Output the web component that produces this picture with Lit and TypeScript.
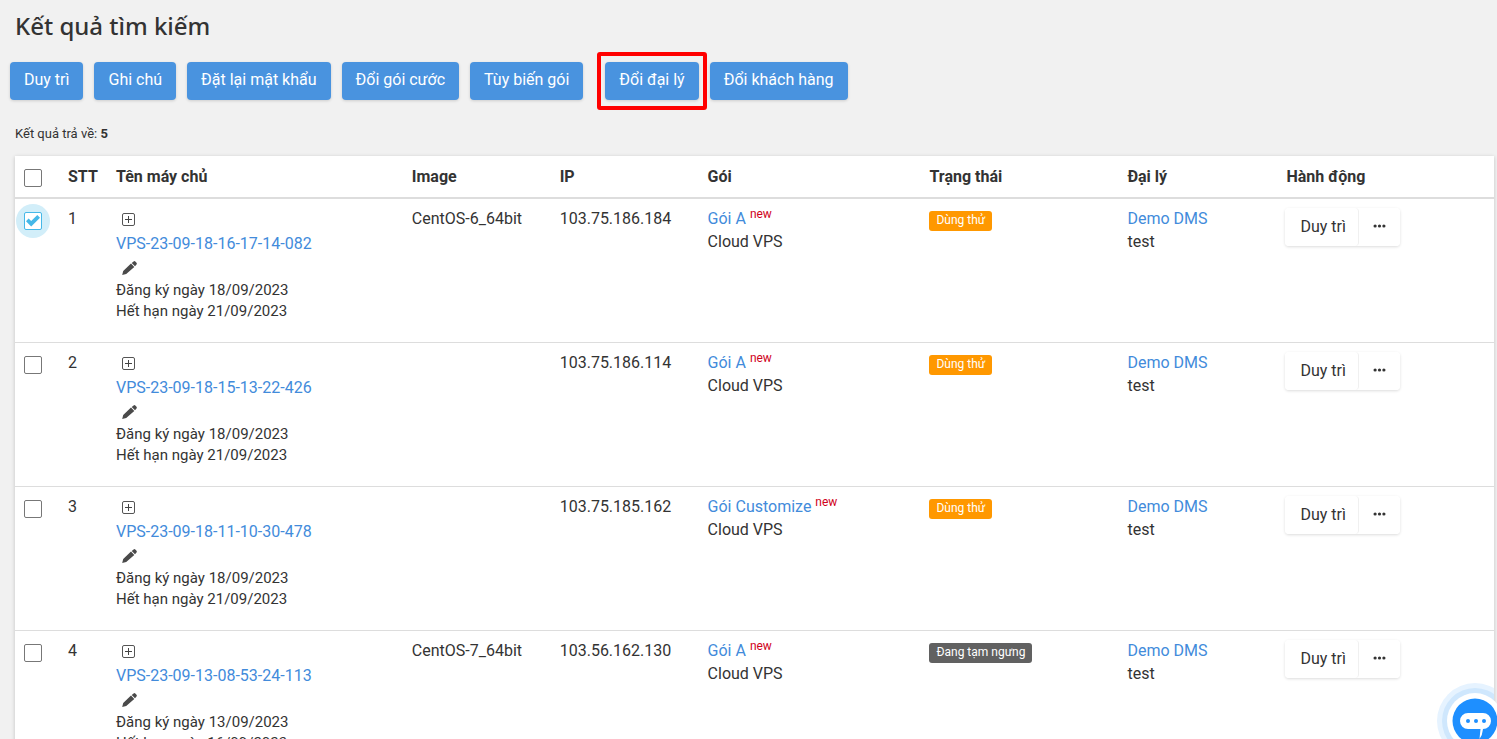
import { LitElement, html, css, svg, nothing } from "lit";
import { customElement, property, state } from "lit/decorators.js";
import { classMap } from "lit/directives/class-map.js";

interface Server {
  id: number;
  name: string;
  image: string;
  ip: string;
  plan: string;
  status: "trial" | "paused";
  from: string;
  to: string;
}

const SERVERS: Server[] = [
  { id: 1, name: "VPS-23-09-18-16-17-14-082", image: "CentOS-6_64bit", ip: "103.75.186.184", plan: "Gói A", status: "trial", from: "18/09/2023", to: "21/09/2023" },
  { id: 2, name: "VPS-23-09-18-15-13-22-426", image: "", ip: "103.75.186.114", plan: "Gói A", status: "trial", from: "18/09/2023", to: "21/09/2023" },
  { id: 3, name: "VPS-23-09-18-11-10-30-478", image: "", ip: "103.75.185.162", plan: "Gói Customize", status: "trial", from: "18/09/2023", to: "21/09/2023" },
  { id: 4, name: "VPS-23-09-13-08-53-24-113", image: "CentOS-7_64bit", ip: "103.56.162.130", plan: "Gói A", status: "paused", from: "13/09/2023", to: "16/09/2023" },
];

const STATUS_LABEL = { trial: "Dùng thử", paused: "Đang tạm ngưng" };

const ACTIONS = ["Duy trì", "Ghi chú", "Đặt lại mật khẩu", "Đổi gói cước", "Tùy biến gói", "Đổi đại lý", "Đổi khách hàng"];
const MARKED_ACTION = "Đổi đại lý";

const plusIcon = html`<svg width="13" height="13" viewBox="0 0 13 13" aria-hidden="true">
  ${svg`<rect x="0.5" y="0.5" width="12" height="12" rx="1.5" fill="none" stroke="#555"/>
  <path d="M3 6.5H10M6.5 3V10" stroke="#444" fill="none"/>`}
</svg>`;

const pencilIcon = html`<svg width="15" height="14" viewBox="0 0 15 14" aria-hidden="true">
  ${svg`<path fill="#4a4a4a" d="M0.2 14L1.2 10L9 2.6L12.3 5.9L4.2 13.1Z M9.7 2L11.6 0.4Q12.5 -0.2 13.3 0.5L14.5 1.7Q15.2 2.5 14.5 3.4L13 5.2Z"/>`}
</svg>`;

@customElement("check-box")
export class CheckBox extends LitElement {
  @property() label = "";
  @property({ type: Boolean }) checked = false;

  static styles = css`
    :host { display: block; }
    .wrap { position: relative; display: block; width: 18px; height: 18px; }
    .wrap.on::before {
      content: "";
      position: absolute;
      inset: -8px;
      border-radius: 50%;
      background: #d2eef9;
    }
    .box {
      position: relative;
      appearance: none;
      display: block;
      box-sizing: border-box;
      width: 18px;
      height: 18px;
      margin: 0;
      border: 1px solid #777;
      border-radius: 2px;
      background: #fff;
    }
    .box:checked { border-color: #45b8e8; }
    .tick { position: absolute; top: 3px; left: 2px; pointer-events: none; }
  `;

  render() {
    return html`<label class=${classMap({ wrap: true, on: this.checked })}>
      <input class="box" type="checkbox" aria-label=${this.label} .checked=${this.checked}
        @change=${(e: Event) => (this.checked = (e.target as HTMLInputElement).checked)} />
      ${this.checked
        ? html`<svg class="tick" width="14" height="12" viewBox="0 0 14 12" aria-hidden="true">
            ${svg`<path fill="#45b8e8" d="M0 6.2L2.6 3.6L5.2 6.1L11.3 0.1L14 2.8L5.2 11.4Z"/>`}
          </svg>`
        : nothing}
    </label>`;
  }
}

@customElement("app-root")
export class AppRoot extends LitElement {
  @state() private selected = new Set([1]);

  static styles = css`
    :host {
      display: block;
      box-sizing: border-box;
      min-height: 100vh;
      padding: 9px 3px 0 15px;
      background: #f1f1f1;
      color: #333;
      font: 16px/23px Roboto, "Noto Sans", sans-serif;
    }
    a { color: #428bdb; text-decoration: none; }
    button { font: inherit; color: inherit; border: 0; cursor: pointer; }
    .title {
      margin: 0 0 20px;
      font: 500 24px/33px "Noto Sans", sans-serif;
    }
    .toolbar { display: flex; flex-wrap: wrap; gap: 11px; margin-left: -5px; }
    .tool {
      height: 38px;
      padding: 0 14px 4px;
      border-radius: 4px;
      background: #4993df;
      color: #fff;
      box-shadow: 0 1px 3px rgba(0, 0, 0, 0.15);
    }
    .marked { position: relative; margin-left: 11px; }
    .marked::after {
      content: "";
      position: absolute;
      inset: -10px -8px;
      border: 4px solid #f00;
      border-radius: 3px;
    }
    .summary { margin: 22px 0 11px; font-size: 13px; }
    .card { background: #fff; box-shadow: 0 1px 4px rgba(0, 0, 0, 0.2); }
    .grid { width: 100%; border-collapse: separate; border-spacing: 0; table-layout: fixed; }
    .grid th, .grid td { box-sizing: border-box; padding: 8px; text-align: left; vertical-align: top; }
    .grid th { padding: 9px 8px; border-bottom: 2px solid #ddd; font-weight: 700; }
    .grid td { border-bottom: 1px solid #ddd; }
    .check { width: 45px; }
    .stt { width: 48px; }
    .c20 { width: 20%; }
    .c15 { width: 15%; }
    .c10 { width: 10%; }
    .agent { width: 159px; }
    .state { width: 198px; }
    .grid th.check, .grid td.check { padding: 13px 8px 0 9px; }
    .icon {
      display: flex;
      align-items: center;
      height: 24px;
      padding: 0 6px;
      background: none;
    }
    .name { display: block; line-height: 25px; }
    .dates { margin: 0 0 12px; font-size: 15px; line-height: 21px; }
    .new { color: #d0021b; font-size: 12px; line-height: 0; vertical-align: super; }
    .badge {
      display: inline-block;
      box-sizing: border-box;
      height: 20px;
      margin-top: 4px;
      padding: 0 7px;
      border-radius: 3px;
      color: #fff;
      font-size: 12px;
      line-height: 19px;
      vertical-align: top;
    }
    .trial { background: #ff9800; }
    .paused { background: #616161; }
    .group { display: inline-flex; margin: 1px 0 0 -1px; border-radius: 4px; box-shadow: 0 1px 3px rgba(0, 0, 0, 0.14); }
    .act, .more { height: 38px; background: #fff; border-radius: 4px; }
    .act { padding: 0 12px 2px 15px; border-right: 1px solid #f0f0f0; }
    .more { display: flex; align-items: center; padding: 0 14px 2px; }
    .chat {
      position: fixed;
      right: -16px;
      bottom: -20px;
      width: 76px;
      height: 76px;
      padding: 0;
      background: none;
    }
  `;

  private renderRow(s: Server) {
    return html`<tr>
      <td class="check"><check-box label="Chọn ${s.name}" ?checked=${this.selected.has(s.id)}></check-box></td>
      <td>${s.id}</td>
      <td>
        <button class="icon" aria-label="Mở rộng">${plusIcon}</button>
        <a class="name" href="#">${s.name}</a>
        <button class="icon" aria-label="Sửa">${pencilIcon}</button>
        <p class="dates">Đăng ký ngày ${s.from}<br />Hết hạn ngày ${s.to}</p>
      </td>
      <td>${s.image}</td>
      <td>${s.ip}</td>
      <td><a href="#">${s.plan}</a> <span class="new">new</span><br />Cloud VPS</td>
      <td><span class="badge ${s.status}">${STATUS_LABEL[s.status]}</span></td>
      <td><a href="#">Demo DMS</a><br />test</td>
      <td>
        <div class="group">
          <button class="act">Duy trì</button>
          <button class="more" aria-label="Thêm">
            <svg width="13" height="4" viewBox="0 0 13 4" aria-hidden="true">
              ${svg`<g fill="#333"><circle cx="2.1" cy="2" r="1.6"/><circle cx="6.5" cy="2" r="1.6"/><circle cx="10.9" cy="2" r="1.6"/></g>`}
            </svg>
          </button>
        </div>
      </td>
    </tr>`;
  }

  render() {
    return html`
      <h1 class="title">Kết quả tìm kiếm</h1>
      <div class="toolbar">
        ${ACTIONS.map((a) => html`<button class=${classMap({ tool: true, marked: a === MARKED_ACTION })}>${a}</button>`)}
      </div>
      <p class="summary">Kết quả trả về: <b>5</b></p>
      <div class="card">
        <table class="grid">
          <thead>
            <tr>
              <th class="check"><check-box label="Chọn tất cả"></check-box></th>
              <th class="stt">STT</th>
              <th class="c20">Tên máy chủ</th>
              <th class="c10">Image</th>
              <th class="c10">IP</th>
              <th class="c15">Gói</th>
              <th class="state">Trạng thái</th>
              <th class="agent">Đại lý</th>
              <th>Hành động</th>
            </tr>
          </thead>
          <tbody>${SERVERS.map((s) => this.renderRow(s))}</tbody>
        </table>
      </div>
      <button class="chat" aria-label="Chat">
        <svg width="76" height="76" viewBox="0 0 76 76" aria-hidden="true">
          ${svg`<clipPath id="halo"><rect width="57" height="76"/></clipPath>
          <g clip-path="url(#halo)">
            <circle cx="38" cy="38" r="38" fill="#e6f3ff"/>
            <circle cx="38" cy="38" r="33" fill="#cfe7fd"/>
          </g>
          <circle cx="38" cy="38" r="28" fill="#fff"/>
          <circle cx="38" cy="38" r="22.5" fill="#1e8fff"/>
          <path fill="#fff" d="M31 30H46A7.5 7.5 0 0 1 46 46Q45.5 52 42.5 56L43.5 46H31A8 8 0 0 1 31 30Z"/>
          <g fill="#1e8fff"><circle cx="31" cy="38" r="2"/><circle cx="39" cy="38" r="2"/><circle cx="47" cy="38" r="2"/></g>`}
        </svg>
      </button>
    `;
  }
}
